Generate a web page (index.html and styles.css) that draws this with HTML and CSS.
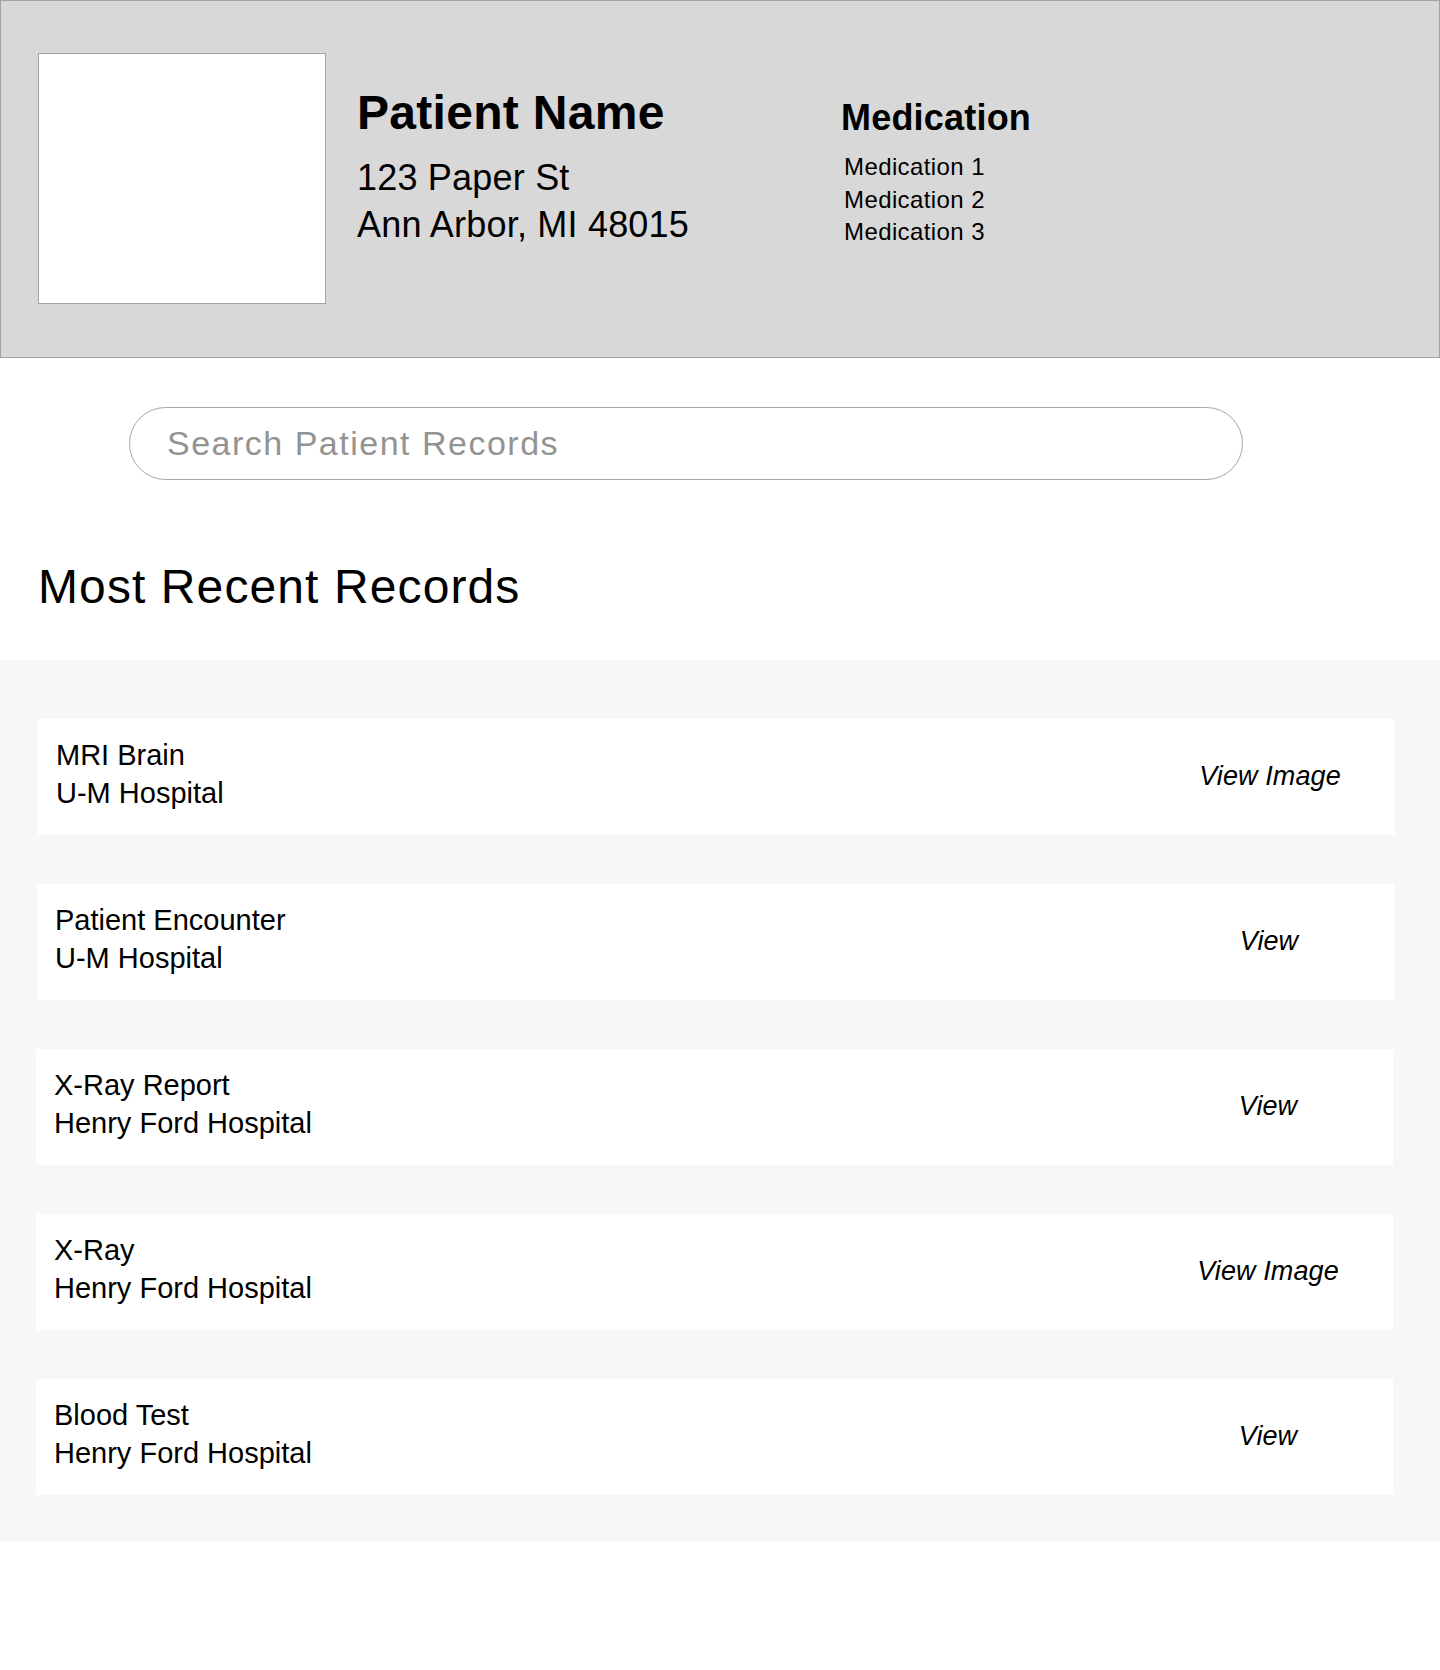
FILE: index.html
```html
<!DOCTYPE html>
<html lang="en">
<head>
<meta charset="utf-8">
<title>Patient Records</title>
<link rel="stylesheet" href="styles.css">
</head>
<body>
<header class="patient-header">
  <div class="photo"></div>
  <div class="identity">
    <h1 class="patient-name">Patient Name</h1>
    <p class="address">123 Paper St<br>Ann Arbor, MI 48015</p>
  </div>
  <div class="medication">
    <h2 class="med-title">Medication</h2>
    <ul class="med-list">
      <li>Medication 1</li>
      <li>Medication 2</li>
      <li>Medication 3</li>
    </ul>
  </div>
</header>

<div class="search-wrap">
  <input class="search" type="text" placeholder="Search Patient Records">
</div>

<h2 class="section-title">Most Recent Records</h2>

<section class="records">
  <div class="record">
    <div class="record-info"><div>MRI Brain</div><div>U-M Hospital</div></div>
    <a class="record-action">View Image</a>
  </div>
  <div class="record">
    <div class="record-info"><div>Patient Encounter</div><div>U-M Hospital</div></div>
    <a class="record-action">View</a>
  </div>
  <div class="record">
    <div class="record-info"><div>X-Ray Report</div><div>Henry Ford Hospital</div></div>
    <a class="record-action">View</a>
  </div>
  <div class="record">
    <div class="record-info"><div>X-Ray</div><div>Henry Ford Hospital</div></div>
    <a class="record-action">View Image</a>
  </div>
  <div class="record">
    <div class="record-info"><div>Blood Test</div><div>Henry Ford Hospital</div></div>
    <a class="record-action">View</a>
  </div>
</section>
</body>
</html>
```

FILE: styles.css
```css
* { box-sizing: border-box; }

body {
  margin: 0;
  font-family: "Liberation Sans", Arial, sans-serif;
  color: #000;
  background: #fff;
}

.patient-header {
  height: 358px;
  background: #d8d8d8;
  border: 1px solid #a3a3a3;
  padding: 52px 0 0 37px;
  display: flex;
  align-items: flex-start;
}

.photo {
  width: 288px;
  height: 251px;
  background: #fff;
  border: 1px solid #a3a3a3;
  flex: none;
}

.identity {
  width: 484px;
  margin-left: 31px;
  margin-top: 34px;
  flex: none;
}

.patient-name {
  margin: 0;
  font-size: 48px;
  line-height: 52px;
  font-weight: 700;
  letter-spacing: 0.3px;
}

.address {
  margin: 15px 0 0;
  font-size: 36px;
  line-height: 47px;
  letter-spacing: 0.2px;
}

.medication {
  margin-top: 45px;
}

.med-title {
  margin: 0;
  font-size: 36px;
  line-height: 40px;
  font-weight: 700;
  letter-spacing: 0.2px;
}

.med-list {
  list-style: none;
  margin: 13px 0 0;
  padding: 0 0 0 3px;
  font-size: 24px;
  line-height: 32.5px;
  letter-spacing: 0.4px;
}

.search-wrap {
  padding: 49px 0 0 129px;
}

.search {
  display: block;
  width: 1114px;
  height: 73px;
  border: 1px solid #a6a6a6;
  border-radius: 37px;
  padding: 0 0 1px 37px;
  font-family: "Liberation Sans", Arial, sans-serif;
  font-size: 34px;
  letter-spacing: 1.5px;
  color: #333;
  background: #fff;
  outline: none;
}

.search::placeholder {
  color: #939393;
}

.section-title {
  margin: 83px 0 0 38px;
  font-size: 48px;
  line-height: 48px;
  font-weight: 400;
  letter-spacing: 1.1px;
}

.records {
  margin-top: 49px;
  background: #f7f7f7;
  padding: 59px 45px 46px 38px;
  display: flex;
  flex-direction: column;
  gap: 49px;
}

.record {
  background: #fff;
  height: 116px;
  padding: 17px 0 23px 18px;
  display: flex;
  align-items: center;
  justify-content: space-between;
}

.record:nth-child(2) { margin: 0 1px 0 -1px; }
.record:nth-child(n+3) { margin: 0 2px 0 -2px; }

.record-info {
  font-size: 29px;
  line-height: 38px;
  align-self: flex-start;
}

.record-action {
  width: 250px;
  text-align: center;
  font-size: 27px;
  line-height: 30px;
  font-style: italic;
  letter-spacing: 0.1px;
  margin-top: 4px;
}
```
